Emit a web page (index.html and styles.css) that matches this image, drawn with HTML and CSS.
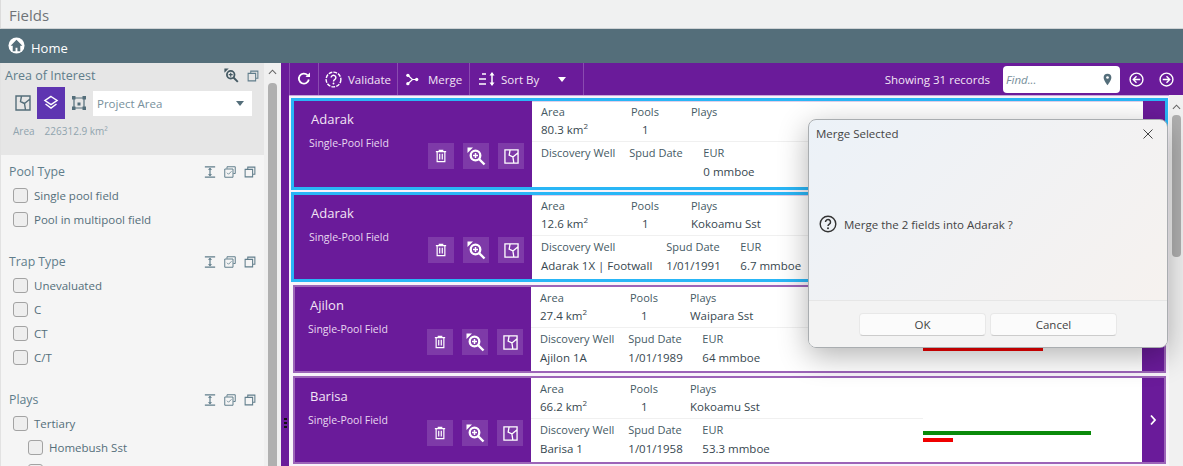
FILE: index.html
```html
<!DOCTYPE html>
<html lang="en">
<head>
    <meta charset="UTF-8">
    <meta name="viewport" content="width=device-width, initial-scale=1.0">
    <title>Fields</title>
    <link rel="stylesheet" href="styles.css">
</head>
<body>

    <svg class="sprites" width="0" height="0">
        <symbol id="i-area" viewBox="0 0 16 16"><path d="M1 1h14v14H1z M6.500 1L5.500 6.500 9.500 8.500 10.500 15 M9.500 8.500L15 4" fill="none" stroke="currentColor" stroke-width="1.400"/></symbol>
        <symbol id="i-zoom" viewBox="0 0 19 19"><circle cx="8.500" cy="8.500" r="4.800" fill="none" stroke="currentColor" stroke-width="2.300"/><path d="M12 12l5.500 5.500" stroke="currentColor" stroke-width="2.400"/><path d="M8.500 6v5M6 8.500h5" stroke="currentColor" stroke-width="1.500"/><path d="M.5.5H6L.5 6z" fill="currentColor"/></symbol>
        <symbol id="i-trash" viewBox="0 0 14 16"><path d="M1 3h12M5 3V1.500h4V3M2.500 3v11.500h9V3M5.500 5.500v6.500M8.500 5.500v6.500" fill="none" stroke="currentColor" stroke-width="1.400"/></symbol>
        <symbol id="i-copy" viewBox="0 0 16 16"><path d="M5 4V1.500h9.500V11H12M1.500 4.500h10v10h-10z" fill="none" stroke="currentColor" stroke-width="1.400"/></symbol>
        <symbol id="i-copycheck" viewBox="0 0 16 16"><path d="M4 3.500V1h11v9h-2.500M1 4h11v11H1z" fill="none" stroke="currentColor" stroke-width="1.300"/><path d="M4 9l2 2 4-4" fill="none" stroke="currentColor" stroke-width="1.100"/></symbol>
        <symbol id="i-expand" viewBox="0 0 14 14"><path d="M1 1h12M1 13h12M7 3v8" fill="none" stroke="currentColor" stroke-width="1.400"/><path d="M4.500 4.500L7 2l2.500 2.500zM4.500 9.500L7 12l2.500-2.500z" fill="currentColor"/></symbol>
        <symbol id="i-layers" viewBox="0 0 16 16"><path d="M8 1.500l6 4-6 4-6-4zM2.500 9L8 13l5.500-4" fill="none" stroke="currentColor" stroke-width="1.500"/></symbol>
        <symbol id="i-poly" viewBox="0 0 16 16"><path d="M3 3h10v10H3z" fill="none" stroke="currentColor" stroke-width="1.200"/><path d="M1 1h3.500v3.500H1zM11.500 1H15v3.500h-3.500zM1 11.500h3.500V15H1zM11.500 11.500H15V15h-3.500zM6.500 7.500h3v3h-3z" fill="currentColor"/></symbol>
        <symbol id="i-help" viewBox="0 0 18 18"><circle cx="9" cy="9" r="7.800" fill="none" stroke="currentColor" stroke-width="1.400"/><path d="M6.500 7a2.500 2.500 0 1 1 3.800 2.100C9.400 9.700 9 10.100 9 11" fill="none" stroke="currentColor" stroke-width="1.500"/><circle cx="9" cy="13.300" r="1" fill="currentColor"/></symbol>
        <symbol id="i-help-dash" viewBox="0 0 18 18"><circle cx="9" cy="9" r="7.800" fill="none" stroke="currentColor" stroke-width="1.500" stroke-dasharray="4 1.200"/><path d="M6.500 7a2.500 2.500 0 1 1 3.800 2.100C9.400 9.700 9 10.100 9 11" fill="none" stroke="currentColor" stroke-width="1.500"/><circle cx="9" cy="13.300" r="1" fill="currentColor"/></symbol>
    </svg>

    <div class="titlebar">Fields</div>
    <div class="homebar">
        <svg class="home-icon" viewBox="0 0 18 18"><circle cx="9" cy="9" r="8.500" fill="#fff"/><path d="M9 3L2.800 9.200H5V15h3v-3.500h2V15h3V9.200h2.200z" fill="#546e7a"/></svg>
        <span>Home</span>
    </div>

    <div class="main">
        <aside class="sidebar">
            <div class="side-content">
                <section class="aoi">
                    <div class="aoi-head">
                        <span>Area of Interest</span>
                        <div class="head-icons">
                            <svg class="ic-zoom"><use href="#i-zoom"/></svg>
                            <svg class="ic"><use href="#i-copy"/></svg>
                        </div>
                    </div>
                    <div class="aoi-tools">
                        <div class="aoi-btn"><svg><use href="#i-area"/></svg></div>
                        <div class="aoi-btn active"><svg><use href="#i-layers"/></svg></div>
                        <div class="aoi-btn"><svg><use href="#i-poly"/></svg></div>
                        <div class="aoi-select"><span>Project Area</span><i class="caret"></i></div>
                    </div>
                    <div class="aoi-area"><span>Area</span><span>226312.9 km²</span></div>
                </section>

                <section class="group">
                    <div class="group-head">
                        <span>Pool Type</span>
                        <div class="head-icons">
                            <svg class="ic"><use href="#i-expand"/></svg>
                            <svg class="ic"><use href="#i-copycheck"/></svg>
                            <svg class="ic"><use href="#i-copy"/></svg>
                        </div>
                    </div>
                    <label class="check"><i></i>Single pool field</label>
                    <label class="check"><i></i>Pool in multipool field</label>
                </section>

                <section class="group">
                    <div class="group-head">
                        <span>Trap Type</span>
                        <div class="head-icons">
                            <svg class="ic"><use href="#i-expand"/></svg>
                            <svg class="ic"><use href="#i-copycheck"/></svg>
                            <svg class="ic"><use href="#i-copy"/></svg>
                        </div>
                    </div>
                    <label class="check"><i></i>Unevaluated</label>
                    <label class="check"><i></i>C</label>
                    <label class="check"><i></i>CT</label>
                    <label class="check"><i></i>C/T</label>
                </section>

                <section class="group">
                    <div class="group-head">
                        <span>Plays</span>
                        <div class="head-icons">
                            <svg class="ic"><use href="#i-expand"/></svg>
                            <svg class="ic"><use href="#i-copycheck"/></svg>
                            <svg class="ic"><use href="#i-copy"/></svg>
                        </div>
                    </div>
                    <label class="check"><i></i>Tertiary</label>
                    <label class="check sub"><i></i>Homebush Sst</label>
                    <label class="check sub"><i></i></label>
                </section>
            </div>
            <div class="side-scroll">
                <svg class="scroll-up" viewBox="0 0 10 6"><path d="M1 5l4-4 4 4" fill="none" stroke="#666" stroke-width="1.200"/></svg>
                <div class="side-thumb"></div>
            </div>
        </aside>

        <div class="splitter"><span class="grip"></span></div>

        <div class="content">
            <div class="toolbar">
                <div class="tool tool-refresh">
                    <svg viewBox="0 0 14 14"><path d="M11.800 7.500A5 5 0 1 1 10.500 3.200" fill="none" stroke="#fff" stroke-width="1.800"/><path d="M8.500 5h4.500V.5z" fill="#fff"/></svg>
                </div>
                <div class="tool tool-validate"><svg><use href="#i-help-dash"/></svg>Validate</div>
                <div class="tool tool-merge">
                    <svg viewBox="0 0 14 14"><path d="M2 2.500L7 7l-5 4.500M7 7h5" fill="none" stroke="#fff" stroke-width="1.300"/><circle cx="2" cy="2.500" r="1.800" fill="#fff"/><circle cx="2" cy="11.500" r="1.800" fill="#fff"/><circle cx="11.500" cy="7" r="1.800" fill="#fff"/></svg>
                    Merge
                </div>
                <div class="tool tool-sort">
                    <svg viewBox="0 0 18 16"><path d="M4 3h4M1 8h7M1 13h7M14 2v12" fill="none" stroke="#fff" stroke-width="1.500"/><path d="M11.500 4.500L14 1l2.500 3.500zM11.500 11.500L14 15l2.500-3.500z" fill="#fff"/></svg>
                    Sort By
                    <i class="caret caret-white"></i>
                </div>
                <div class="tool-right">
                    <span class="records">Showing 31 records</span>
                    <div class="find">
                        <span>Find...</span>
                        <svg viewBox="0 0 10 14"><path d="M5 .5a4.300 4.300 0 0 1 4.300 4.300C9.300 8 5 13.500 5 13.500S.7 8 .7 4.800A4.300 4.300 0 0 1 5 .5z" fill="#546e7a"/><circle cx="5" cy="4.800" r="1.500" fill="#fff"/></svg>
                    </div>
                    <svg class="nav-icon" viewBox="0 0 14 14"><circle cx="7" cy="7" r="6" fill="none" stroke="#fff" stroke-width="1.300"/><path d="M10.500 7h-6M7 4L4 7l3 3" fill="none" stroke="#fff" stroke-width="1.300"/></svg>
                    <svg class="nav-icon" viewBox="0 0 14 14"><circle cx="7" cy="7" r="6" fill="none" stroke="#fff" stroke-width="1.300"/><path d="M3.500 7h6M7 4l3 3-3 3" fill="none" stroke="#fff" stroke-width="1.300"/></svg>
                </div>
            </div>

            <div class="list-wrap">
                <div class="list">
                    <article class="card selected">
                        <div class="card-head">
                            <div class="card-name">Adarak</div>
                            <div class="card-type">Single-Pool Field</div>
                            <div class="card-actions">
                                <span class="act"><svg class="a-trash"><use href="#i-trash"/></svg></span>
                                <span class="act"><svg class="a-zoom"><use href="#i-zoom"/></svg></span>
                                <span class="act"><svg class="a-area"><use href="#i-area"/></svg></span>
                            </div>
                        </div>
                        <div class="card-body">
                            <div class="row row-top">
                                <div class="cell c-area"><label>Area</label><b>80.3 km<sup>2</sup></b></div>
                                <div class="cell c-pools"><label>Pools</label><b>1</b></div>
                                <div class="cell"><label>Plays</label><b>&nbsp;</b></div>
                            </div>
                            <div class="row">
                                <div class="cell"><label>Discovery Well</label><b>&nbsp;</b></div>
                                <div class="cell c-spud"><label>Spud Date</label><b>&nbsp;</b></div>
                                <div class="cell"><label>EUR</label><b>0 mmboe</b></div>
                            </div>
                        </div>
                        <div class="card-chart"></div>
                        <div class="card-more"></div>
                    </article>

                    <article class="card selected second">
                        <div class="card-head">
                            <div class="card-name">Adarak</div>
                            <div class="card-type">Single-Pool Field</div>
                            <div class="card-actions">
                                <span class="act"><svg class="a-trash"><use href="#i-trash"/></svg></span>
                                <span class="act"><svg class="a-zoom"><use href="#i-zoom"/></svg></span>
                                <span class="act"><svg class="a-area"><use href="#i-area"/></svg></span>
                            </div>
                        </div>
                        <div class="card-body">
                            <div class="row row-top">
                                <div class="cell c-area"><label>Area</label><b>12.6 km<sup>2</sup></b></div>
                                <div class="cell c-pools"><label>Pools</label><b>1</b></div>
                                <div class="cell"><label>Plays</label><b>Kokoamu Sst</b></div>
                            </div>
                            <div class="row">
                                <div class="cell"><label>Discovery Well</label><b>Adarak 1X | Footwall</b></div>
                                <div class="cell c-spud"><label>Spud Date</label><b>1/01/1991</b></div>
                                <div class="cell"><label>EUR</label><b>6.7 mmboe</b></div>
                            </div>
                        </div>
                        <div class="card-chart"></div>
                        <div class="card-more"></div>
                    </article>

                    <article class="card">
                        <div class="card-head">
                            <div class="card-name">Ajilon</div>
                            <div class="card-type">Single-Pool Field</div>
                            <div class="card-actions">
                                <span class="act"><svg class="a-trash"><use href="#i-trash"/></svg></span>
                                <span class="act"><svg class="a-zoom"><use href="#i-zoom"/></svg></span>
                                <span class="act"><svg class="a-area"><use href="#i-area"/></svg></span>
                            </div>
                        </div>
                        <div class="card-body">
                            <div class="row row-top">
                                <div class="cell c-area"><label>Area</label><b>27.4 km<sup>2</sup></b></div>
                                <div class="cell c-pools"><label>Pools</label><b>1</b></div>
                                <div class="cell"><label>Plays</label><b>Waipara Sst</b></div>
                            </div>
                            <div class="row">
                                <div class="cell"><label>Discovery Well</label><b>Ajilon 1A</b></div>
                                <div class="cell c-spud"><label>Spud Date</label><b>1/01/1989</b></div>
                                <div class="cell"><label>EUR</label><b>64 mmboe</b></div>
                            </div>
                        </div>
                        <div class="card-chart">
                            <div class="bar bar-green" style="width: 160px"></div>
                            <div class="bar bar-red" style="width: 120px"></div>
                        </div>
                        <div class="card-more"></div>
                    </article>

                    <article class="card">
                        <div class="card-head">
                            <div class="card-name">Barisa</div>
                            <div class="card-type">Single-Pool Field</div>
                            <div class="card-actions">
                                <span class="act"><svg class="a-trash"><use href="#i-trash"/></svg></span>
                                <span class="act"><svg class="a-zoom"><use href="#i-zoom"/></svg></span>
                                <span class="act"><svg class="a-area"><use href="#i-area"/></svg></span>
                            </div>
                        </div>
                        <div class="card-body">
                            <div class="row row-top">
                                <div class="cell c-area"><label>Area</label><b>66.2 km<sup>2</sup></b></div>
                                <div class="cell c-pools"><label>Pools</label><b>1</b></div>
                                <div class="cell"><label>Plays</label><b>Kokoamu Sst</b></div>
                            </div>
                            <div class="row">
                                <div class="cell"><label>Discovery Well</label><b>Barisa 1</b></div>
                                <div class="cell c-spud"><label>Spud Date</label><b>1/01/1958</b></div>
                                <div class="cell"><label>EUR</label><b>53.3 mmboe</b></div>
                            </div>
                        </div>
                        <div class="card-chart">
                            <div class="bar bar-green" style="width: 168px"></div>
                            <div class="bar bar-red" style="width: 30px"></div>
                        </div>
                        <div class="card-more">
                            <svg viewBox="0 0 8 12"><path d="M2 1.500L6 6l-4 4.500" fill="none" stroke="#fff" stroke-width="1.800"/></svg>
                        </div>
                    </article>
                </div>
                <div class="list-scroll">
                    <svg class="scroll-up" viewBox="0 0 10 6"><path d="M1 5l4-4 4 4" fill="none" stroke="#666" stroke-width="1.200"/></svg>
                    <div class="list-thumb"></div>
                </div>
            </div>
        </div>
    </div>

    <div class="dialog">
        <div class="dialog-head">
            <span>Merge Selected</span>
            <svg viewBox="0 0 10 10"><path d="M.5.5l9 9M9.500.5l-9 9" stroke="#444" stroke-width="1"/></svg>
        </div>
        <div class="dialog-msg">
            <svg><use href="#i-help"/></svg>
            <span>Merge the 2 fields into Adarak ?</span>
        </div>
        <div class="dialog-foot">
            <button class="dlg-btn">OK</button>
            <button class="dlg-btn">Cancel</button>
        </div>
    </div>

</body>
</html>
```

FILE: styles.css
```css
* {
    box-sizing: border-box;
}
body {
    margin: 0;
    height: 466px;
    overflow: hidden;
    font-family: "Open Sans", "Noto Sans", sans-serif;
    font-size: 12px;
    color: #455a64;
    background: #f1f1f1;
    display: flex;
    flex-direction: column;
}
.sprites {
    position: absolute;
}
.titlebar {
    height: 29px;
    flex: none;
    padding: 5px 0 0 8px;
    font-size: 15px;
    line-height: 20px;
    color: #6f7478;
    background: #f0f1f1;
    border-left: 1px solid #dcdcdc;
    border-bottom: 1px solid #cfd3d5;
}
.homebar {
    height: 34px;
    flex: none;
    display: flex;
    align-items: center;
    gap: 6px;
    padding: 3px 0 0 8px;
    background: #546e7a;
    color: #fff;
    font-size: 13px;
}
.home-icon {
    width: 17px;
    height: 17px;
    margin-top: -4px;
}
.main {
    flex: 1;
    display: flex;
    min-height: 0;
}

/* left filter panel */
.sidebar {
    width: 281px;
    flex: none;
    display: flex;
    background: #f0f0f0;
    overflow: hidden;
}
.side-content {
    width: 264px;
    flex: none;
    background: #f5f5f5;
    border-left: 1px solid #e2e2e2;
}
.aoi {
    height: 92px;
    padding: 4px 5px 0 4px;
    background: #e6e6e6;
}
.aoi-head {
    display: flex;
    justify-content: space-between;
    align-items: center;
    font-size: 12.500px;
    line-height: 17px;
    color: #607d8b;
}
.head-icons {
    display: flex;
    align-items: center;
    gap: 8px;
    color: #607d8b;
}
.ic {
    width: 12px;
    height: 12px;
}
.ic-zoom {
    width: 15px;
    height: 15px;
    color: #455a64;
}
.aoi-tools {
    display: flex;
    align-items: center;
    margin-top: 3px;
}
.aoi-btn {
    width: 28px;
    height: 32px;
    display: flex;
    align-items: center;
    justify-content: center;
    color: #546e7a;
}
.aoi-btn:first-child {
    margin-left: 4px;
}
.aoi-btn svg {
    width: 16px;
    height: 16px;
}
.aoi-btn.active {
    background: #5e35b1;
    color: #fff;
}
.aoi-select {
    width: 159px;
    height: 25px;
    padding: 0 8px 0 4px;
    display: flex;
    align-items: center;
    justify-content: space-between;
    background: #fff;
    color: #78909c;
    font-size: 11.500px;
}
.caret {
    width: 0;
    height: 0;
    border-left: 4.500px solid transparent;
    border-right: 4.500px solid transparent;
    border-top: 5px solid #546e7a;
}
.caret-white {
    border-top-color: #fff;
    margin-left: 19px;
}
.aoi-area {
    display: flex;
    gap: 10px;
    margin: 5px 0 0 8px;
    font-size: 10px;
    color: #90a4ae;
}
.group {
    padding: 8px 8px 0 8px;
    margin-bottom: 14px;
}
.group-head {
    display: flex;
    justify-content: space-between;
    align-items: center;
    height: 17px;
    margin-bottom: 3px;
    font-size: 12.300px;
    color: #607d8b;
}
.check {
    display: flex;
    align-items: center;
    gap: 6px;
    height: 24px;
    padding-left: 4px;
    font-size: 11.500px;
    color: #546e7a;
}
.check i {
    width: 15px;
    height: 15px;
    flex: none;
    background: #eee;
    border: 1px solid #a3a3a3;
    border-radius: 3px;
}
.check.sub {
    padding-left: 19px;
}
.side-scroll {
    flex: 1;
    display: flex;
    flex-direction: column;
    align-items: center;
    padding-top: 6px;
    background: #f0f0f0;
}
.scroll-up {
    width: 9px;
    height: 6px;
    flex: none;
}
.side-thumb {
    width: 9px;
    flex: 1;
    margin-top: 8px;
    background: #b0b0b0;
    border-radius: 4px 4px 0 0;
}
.splitter {
    width: 8px;
    flex: none;
    background: #6a1b9a;
    position: relative;
}
.grip {
    position: absolute;
    left: 3px;
    top: 354px;
    width: 3px;
    height: 11px;
    background: radial-gradient(circle, #111 1.200px, transparent 1.500px) 0 0 / 3px 4px;
}

/* records area */
.content {
    flex: 1;
    min-width: 0;
    display: flex;
    flex-direction: column;
}
.toolbar {
    height: 32px;
    flex: none;
    display: flex;
    align-items: stretch;
    background: #6a1b9a;
    color: #f3e5f5;
    border-left: 1px solid #8a4bb0;
}
.tool {
    display: flex;
    align-items: center;
    border-right: 1px solid #8a4bb0;
    font-size: 11.500px;
    padding-left: 6px;
}
.tool-refresh {
    width: 29px;
    padding-left: 7px;
}
.tool-refresh svg {
    width: 14px;
    height: 14px;
}
.tool-validate {
    width: 79px;
    gap: 6px;
}
.tool-validate svg {
    width: 17px;
    height: 17px;
    color: #fff;
}
.tool-merge {
    width: 72px;
    gap: 9px;
    padding-left: 8px;
}
.tool-merge svg {
    width: 13px;
    height: 13px;
}
.tool-sort {
    width: 114px;
    padding-left: 8px;
}
.tool-sort svg {
    width: 18px;
    height: 16px;
    margin-right: 5px;
}
.tool-right {
    flex: 1;
    display: flex;
    align-items: center;
    justify-content: flex-end;
    padding-right: 9px;
}
.records {
    margin-right: 13px;
    font-size: 11.500px;
}
.find {
    width: 117px;
    height: 27px;
    margin-right: 9px;
    padding: 0 8px 0 3px;
    display: flex;
    align-items: center;
    justify-content: space-between;
    background: #fff;
    border-radius: 4px;
    font-style: italic;
    font-size: 11.500px;
    color: #78909c;
}
.find svg {
    width: 9px;
    height: 13px;
}
.nav-icon {
    width: 15px;
    height: 15px;
    margin-left: 15px;
}
.nav-icon:first-of-type {
    margin-left: 0;
}
.list-wrap {
    flex: 1;
    min-height: 0;
    display: flex;
    overflow: hidden;
}
.list {
    flex: 1;
    min-width: 0;
    padding: 2px 1px 0 2px;
    background: #f8f3fa;
    border-top: 1px solid #c9a9da;
}
.card {
    height: 88px;
    margin: 0 2px 3px 2px;
    display: flex;
    background: #fff;
    border: 2px solid #9c64b8;
}
.card.selected {
    height: 92px;
    margin: 0 0 2px 0;
    border: 3px solid #29b6f6;
}
.card.second {
    height: 90px;
    margin-bottom: 3px;
}
.card-head {
    width: 236px;
    flex: none;
    padding: 8px 0 0 13px;
    display: flex;
    flex-direction: column;
    background: #6a1b9a;
    color: #f3e5f5;
}
.selected .card-head {
    width: 238px;
    padding-left: 15px;
}
.card-name {
    margin-left: 2px;
    font-size: 13px;
    line-height: 20px;
}
.card-type {
    margin-top: 6px;
    font-size: 10.500px;
    line-height: 16px;
    color: #e8d8f0;
}
.card-actions {
    margin: -8px 8px 0 auto;
    display: flex;
    gap: 9px;
}
.act {
    width: 26px;
    height: 26px;
    display: flex;
    align-items: center;
    justify-content: center;
    background: #7e3aa8;
    color: #fff;
}
.a-trash {
    width: 12px;
    height: 14px;
}
.a-zoom {
    width: 19px;
    height: 19px;
}
.a-area {
    width: 15px;
    height: 15px;
}
.card-body {
    width: 392px;
    flex: none;
    display: flex;
    flex-direction: column;
    border-top: 1px solid transparent;
    color: #455a64;
}
.selected .card-body {
    width: 391px;
    border-top-color: #e0d0ea;
}
.selected .card-chart {
    border-top: 1px solid #e0d0ea;
}
.row {
    flex: 1;
    display: flex;
    gap: 14px;
    padding: 3px 0 0 9px;
}
.row-top {
    flex: none;
    height: 40px;
    gap: 0;
    padding-top: 2px;
    border-bottom: 1px solid #f0f0f0;
}
.cell label {
    display: block;
    font-size: 11px;
    line-height: 16px;
    color: #455a64;
}
.cell b {
    display: block;
    margin-top: 2px;
    font-size: 11.500px;
    line-height: 17px;
    font-weight: 400;
    color: #37474f;
}
.row-top .cell b {
    margin-top: 1px;
}
.cell sup {
    font-size: 8px;
    line-height: 0;
}
.c-area {
    width: 90px;
}
.c-pools {
    width: 60px;
}
.c-pools b {
    padding-left: 11px;
}
.c-spud {
    min-width: 60px;
}
.card-chart {
    flex: 1;
    min-width: 0;
    display: flex;
    flex-direction: column;
    justify-content: flex-end;
    gap: 3px;
    padding-bottom: 20px;
}
.bar {
    height: 4px;
}
.bar-green {
    background: #0a8a0a;
}
.bar-red {
    background: #f00000;
}
.card-more {
    width: 22px;
    flex: none;
    display: flex;
    align-items: center;
    justify-content: center;
    background: #6a1b9a;
}
.card-more svg {
    width: 8px;
    height: 12px;
}
.list-scroll {
    width: 14px;
    flex: none;
    display: flex;
    flex-direction: column;
    align-items: center;
    padding-top: 9px;
    background: #f1f1f1;
}
.list-thumb {
    width: 9px;
    height: 142px;
    margin-top: 5px;
    background: #b0b0b0;
    border-radius: 4px;
}

/* merge dialog, floats over the list */
.dialog {
    position: absolute;
    left: 808px;
    top: 119px;
    width: 360px;
    height: 229px;
    display: flex;
    flex-direction: column;
    background: linear-gradient(135deg, #ecf2f8, #f7f2ee);
    border: 1px solid #a9adb0;
    border-radius: 8px;
    box-shadow: 0 8px 30px rgba(0, 0, 0, 0.3);
    color: #444;
    overflow: hidden;
}
.dialog-head {
    display: flex;
    justify-content: space-between;
    align-items: center;
    padding: 4px 14px 0 7px;
    font-size: 11.500px;
    line-height: 20px;
}
.dialog-head svg {
    width: 10px;
    height: 10px;
}
.dialog-msg {
    flex: 1;
    display: flex;
    align-items: center;
    gap: 7px;
    padding: 4px 0 0 10px;
    font-size: 11.500px;
}
.dialog-msg svg {
    width: 18px;
    height: 18px;
    color: #333;
}
.dialog-foot {
    height: 47px;
    flex: none;
    display: flex;
    justify-content: center;
    gap: 4px;
    padding-top: 12px;
    background: #f3f3f3;
    border-top: 1px solid #e6e6e6;
}
.dlg-btn {
    width: 127px;
    height: 23px;
    font: inherit;
    font-size: 11.500px;
    color: #444;
    background: #fbfbfb;
    border: 1px solid #e8e8e8;
    border-bottom-color: #ccc;
    border-radius: 4px;
}
```
